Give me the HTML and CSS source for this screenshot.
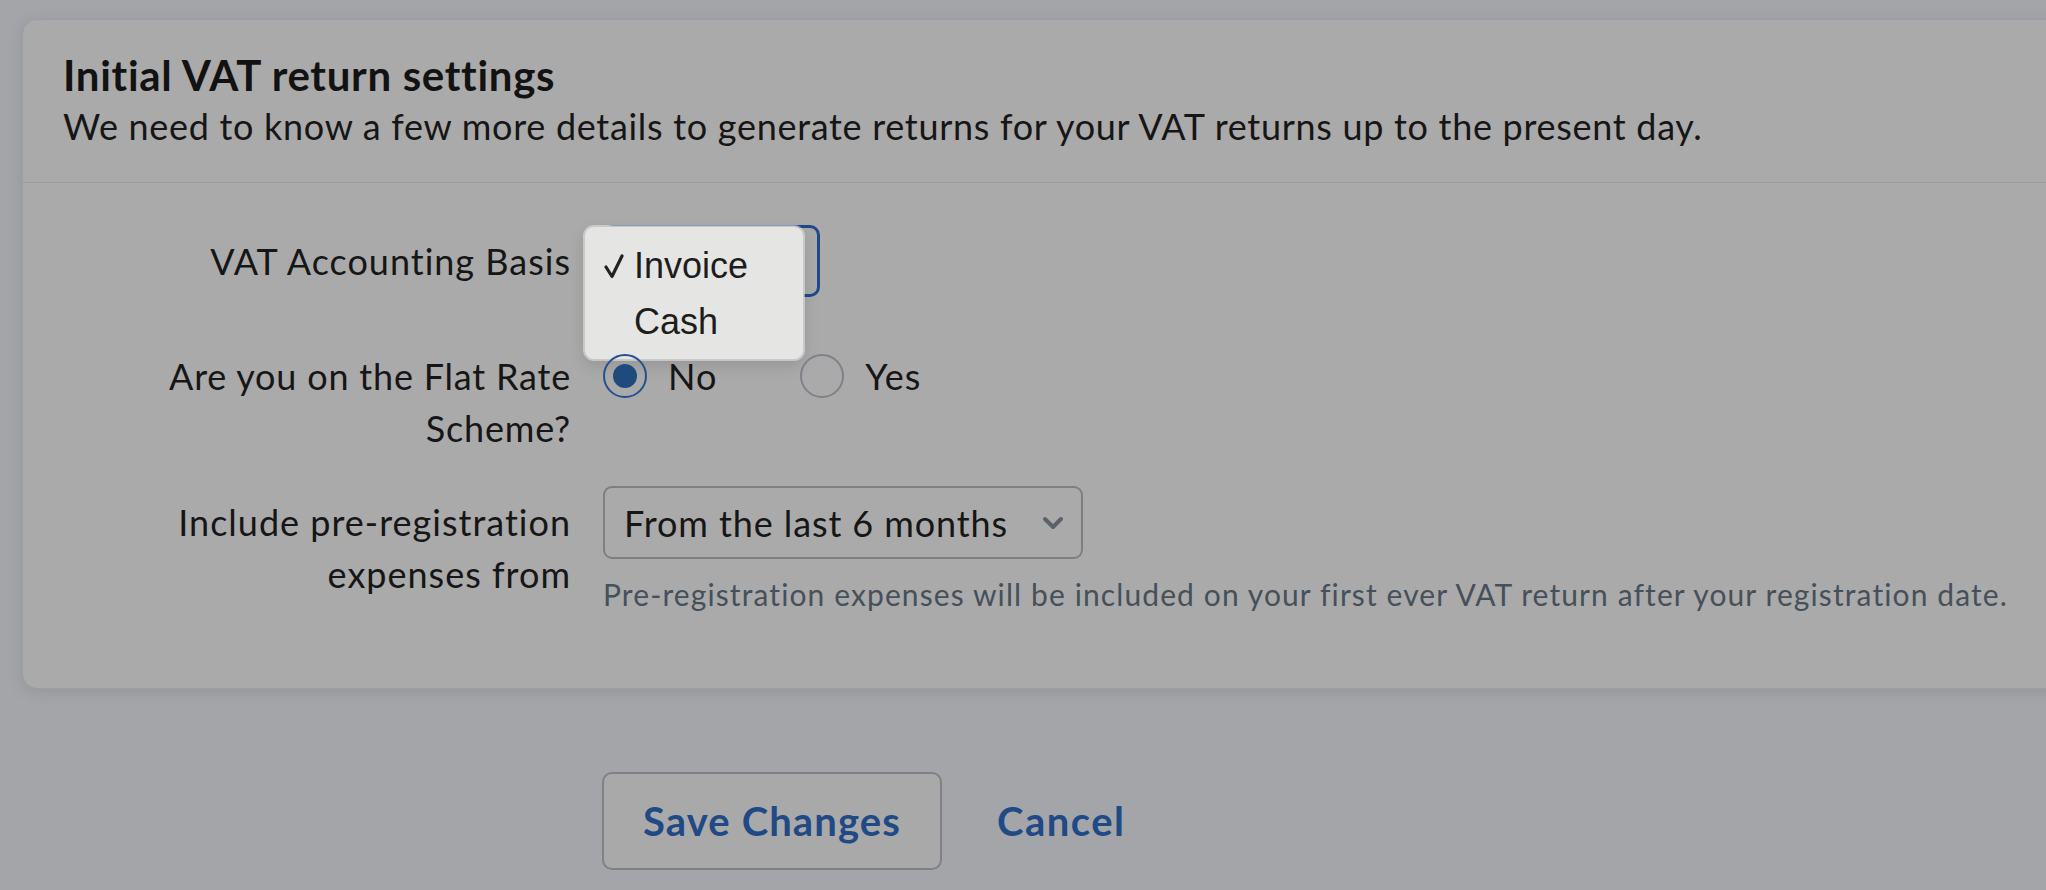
FILE: index.html
```html
<!DOCTYPE html>
<html lang="en">
<head>
<meta charset="utf-8">
<title>Initial VAT return settings</title>
<link rel="stylesheet" href="styles.css">
</head>
<body>
<div class="page">
  <section class="card">
    <header class="card-header">
      <h1 class="card-title">Initial VAT return settings</h1>
      <p class="card-subtitle">We need to know a few more details to generate returns for your VAT returns up to the present day.</p>
    </header>
    <div class="card-body">
      <div class="form-row">
        <div class="form-label label-select">VAT Accounting Basis</div>
        <div class="form-control">
          <div class="select select-focus"></div>
          <div class="menu">
            <div class="menu-item">
              <span class="menu-check"><svg width="20" height="26" viewBox="0 0 20 26"><path d="M2 14 L8 23.5 L18 3" fill="none" stroke="#222" stroke-width="3.2" stroke-linecap="round" stroke-linejoin="round"/></svg></span>
              <span>Invoice</span>
            </div>
            <div class="menu-item">
              <span class="menu-check"></span>
              <span>Cash</span>
            </div>
          </div>
        </div>
      </div>
      <div class="form-row">
        <div class="form-label label-radio">Are you on the Flat Rate<br>Scheme?</div>
        <div class="form-control radios">
          <label class="radio-option"><span class="radio radio-checked"><span class="radio-dot"></span></span><span>No</span></label>
          <label class="radio-option"><span class="radio"></span><span>Yes</span></label>
        </div>
      </div>
      <div class="form-row">
        <div class="form-label label-select">Include pre-registration<br>expenses from</div>
        <div class="form-control">
          <div class="select select-wide">
            <span class="select-value">From the last 6 months</span>
            <svg class="chevron" width="22" height="14" viewBox="0 0 22 14"><polyline points="3,3 11,11 19,3" fill="none" stroke="#5b6167" stroke-width="4" stroke-linecap="round" stroke-linejoin="round"/></svg>
          </div>
          <p class="help">Pre-registration expenses will be included on your first ever VAT return after your registration date.</p>
        </div>
      </div>
    </div>
  </section>
  <div class="actions">
    <button class="btn" type="button">Save Changes</button>
    <a class="link" href="#">Cancel</a>
  </div>
</div>
</body>
</html>
```
FILE: styles.css
```css
html, body {
  margin: 0;
  padding: 0;
  height: 100%;
}
body {
  background: #a3a5a9;
  font-family: Lato, "Open Sans", Arial, sans-serif;
  color: #161616;
  overflow: hidden;
}
.page {
  padding: 19px 0 0 22px;
}
.card {
  background: #aaaaaa;
  border: 1px solid #9e9e9f;
  border-radius: 15px;
  margin-right: -60px;
  box-shadow: 0 3px 14px rgba(80, 84, 92, 0.18);
}
.card-header {
  padding: 30px 42px 34px 40px;
  border-bottom: 1px solid #9a9a9b;
}
.card-title {
  margin: 0;
  font-size: 42px;
  line-height: 50px;
  font-weight: 700;
  letter-spacing: 0.7px;
  color: #121212;
}
.card-subtitle {
  margin: 4px 0 0 0;
  font-size: 36px;
  line-height: 44px;
  letter-spacing: 0.7px;
  color: #161616;
}
.card-body {
  padding: 42px 42px 42px 42px;
}
.form-row {
  display: flex;
  align-items: flex-start;
  gap: 32px;
  margin-bottom: 32px;
}
.form-label {
  width: 506px;
  flex: none;
  text-align: right;
  font-size: 36px;
  line-height: 52px;
  letter-spacing: 1px;
}
.label-select {
  padding-top: 10px;
}
.label-radio {
  padding-top: 21px;
  letter-spacing: 0.8px;
}
.form-control {
  position: relative;
}
.select {
  box-sizing: border-box;
  display: flex;
  align-items: center;
  border-radius: 10px;
  font-size: 36px;
  line-height: 44px;
  letter-spacing: 0.9px;
}
.select-focus {
  width: 217px;
  height: 72px;
  border: 3px solid #20498a;
  padding-left: 20px;
}
.select-wide {
  width: 480px;
  height: 73px;
  border: 2px solid #7c8085;
  border-radius: 9px;
  padding: 0 17px 0 19px;
  justify-content: space-between;
}
.chevron {
  display: block;
}
.help {
  margin: 15px 0 0 0;
  font-size: 30px;
  line-height: 40px;
  letter-spacing: 1.1px;
  color: #46505a;
  white-space: nowrap;
}
.menu {
  position: absolute;
  left: -19px;
  top: 1px;
  width: 220px;
  height: 134px;
  box-sizing: border-box;
  padding: 11px 0;
  background: #e5e5e4;
  border: 1px solid #c9c9c9;
  border-radius: 10px;
  box-shadow: 0 0 0 1px rgba(240, 240, 240, 0.5), 0 6px 16px rgba(0, 0, 0, 0.12);
  font-family: "Liberation Sans", Arial, sans-serif;
  font-size: 36px;
  color: #1d1d1d;
}
.menu-item {
  display: flex;
  align-items: center;
  height: 56px;
  padding-left: 19px;
}
.menu-check {
  width: 30px;
  flex: none;
  display: flex;
  align-items: center;
}
.radios {
  display: flex;
  gap: 83px;
}
.radio-option {
  display: flex;
  align-items: center;
  gap: 21px;
  height: 52px;
  margin-top: 21px;
  font-size: 36px;
  line-height: 52px;
  letter-spacing: 1px;
}
.radio {
  box-sizing: border-box;
  width: 44px;
  height: 44px;
  border-radius: 50%;
  border: 2px solid #7d8288;
  display: flex;
  align-items: center;
  justify-content: center;
}
.radio-checked {
  border-color: #23508e;
}
.radio-dot {
  width: 24px;
  height: 24px;
  border-radius: 50%;
  background: #1f4b7c;
}
.actions {
  display: flex;
  align-items: center;
  margin-top: 83px;
  padding-left: 580px;
}
.btn {
  box-sizing: border-box;
  width: 340px;
  height: 98px;
  border: 2px solid #7f8185;
  border-radius: 10px;
  background: #a9a9a9;
  font-family: Lato, "Open Sans", Arial, sans-serif;
  font-size: 40px;
  font-weight: 700;
  letter-spacing: 1.1px;
  color: #1f4a85;
  padding: 0;
}
.link {
  margin-left: 55px;
  font-size: 40px;
  font-weight: 700;
  letter-spacing: 1.5px;
  color: #1f4a85;
  text-decoration: none;
}
```
